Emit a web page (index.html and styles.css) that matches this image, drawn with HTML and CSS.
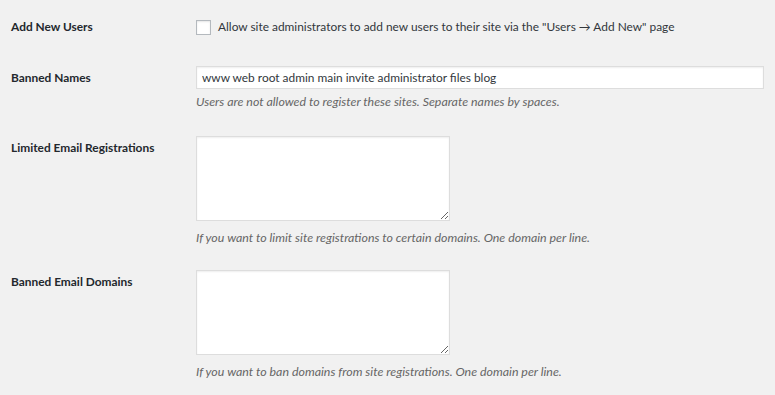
FILE: index.html
```html
<!DOCTYPE html>
<html lang="en">
<head>
    <meta charset="UTF-8">
    <title>Registration Settings</title>
    <link rel="stylesheet" href="styles.css">
</head>
<body>

    <form class="form-table">
        <!-- Add new users -->
        <div class="row row-first">
            <div class="label">Add New Users</div>
            <div class="field">
                <label class="check">
                    <input type="checkbox" name="add_new_users">
                    <span>Allow site administrators to add new users to their site via the "Users &rarr; Add New" page</span>
                </label>
            </div>
        </div>

        <!-- Banned names -->
        <div class="row row-input">
            <div class="label">Banned Names</div>
            <div class="field">
                <input type="text" class="text-input" name="illegal_names" value="www web root admin main invite administrator files blog">
                <p class="description">Users are not allowed to register these sites. Separate names by spaces.</p>
            </div>
        </div>

        <!-- Limited email -->
        <div class="row row-area">
            <div class="label">Limited Email Registrations</div>
            <div class="field">
                <textarea name="limited_email_domains"></textarea>
                <p class="description">If you want to limit site registrations to certain domains. One domain per line.</p>
            </div>
        </div>

        <!-- Banned email -->
        <div class="row row-area">
            <div class="label">Banned Email Domains</div>
            <div class="field">
                <textarea name="banned_email_domains"></textarea>
                <p class="description">If you want to ban domains from site registrations. One domain per line.</p>
            </div>
        </div>
    </form>

</body>
</html>
```

FILE: styles.css
```css
body {
    margin: 0;
    padding: 0 0 0 11px;
    background-color: #f1f1f1;
    color: #23282d;
    font-family: Lato, "Open Sans", sans-serif;
    font-size: 11.9px;
    line-height: 20px;
}
.form-table {
    display: flex;
    flex-direction: column;
}
.row {
    display: grid;
    grid-template-columns: 185px 1fr;
}
.row-first {
    padding-top: 17px;
}
.row-input {
    padding-top: 29px;
}
.row-area {
    padding-top: 25px;
}
.row-area + .row-area {
    padding-top: 23px;
}
.label {
    font-weight: 700;
}
.row-input .label {
    padding-top: 2px;
}
.row-area .label {
    padding-top: 2px;
}
.field {
    display: flex;
    flex-direction: column;
    align-items: flex-start;
}
.check {
    display: flex;
    align-items: center;
    gap: 7px;
}
.check input {
    appearance: none;
    margin: 0;
    width: 15px;
    height: 15px;
    background: #fff;
    border: 1px solid #b4b9be;
    box-shadow: inset 0 1px 2px rgba(0, 0, 0, 0.1);
}
.check span {
    color: #32373c;
}
.text-input {
    box-sizing: border-box;
    width: 568px;
    height: 23px;
    margin: 0;
    padding: 0 5px;
    border: 1px solid #ddd;
    background: #fff;
    box-shadow: inset 0 1px 2px rgba(0, 0, 0, 0.07);
    font: inherit;
    color: #32373c;
}
textarea {
    box-sizing: border-box;
    width: 254px;
    height: 85px;
    margin: 0;
    border: 1px solid #ddd;
    background: #fff;
    box-shadow: inset 0 1px 2px rgba(0, 0, 0, 0.07);
}
.description {
    margin: 4px 0 0;
    font-size: 12.4px;
    font-style: italic;
    color: #666;
    line-height: 18px;
}
.row-area .description {
    margin-top: 8px;
}
```
